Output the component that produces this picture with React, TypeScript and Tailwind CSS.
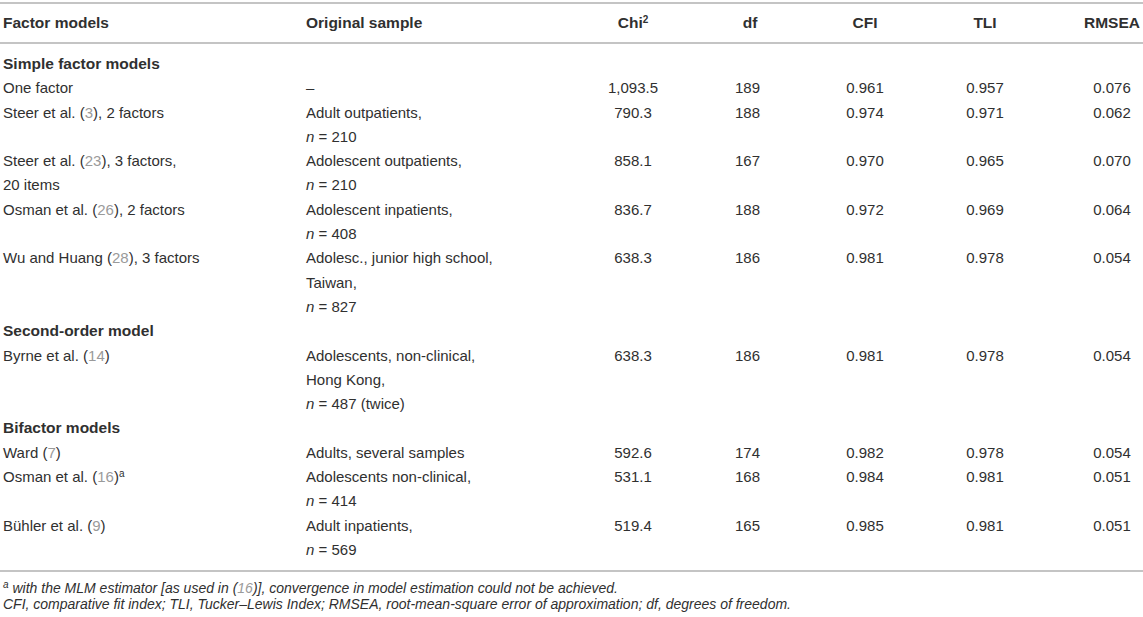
import type { ReactNode } from "react";

// Fit indices table for factor models of the scale.

type Row = {
  model: ReactNode;
  sample: ReactNode;
  chi?: string;
  df?: string;
  cfi?: string;
  tli?: string;
  rmsea?: string;
  section?: boolean;
};

function Ref({ n }: { n: string }) {
  return (
    <>
      (<span className="text-[#9a9a9a]">{n}</span>)
    </>
  );
}

function N({ v }: { v: string }) {
  return (
    <>
      <i>n</i> = {v}
    </>
  );
}

const rows: Row[] = [
  { section: true, model: "Simple factor models", sample: null },
  { model: "One factor", sample: "–", chi: "1,093.5", df: "189", cfi: "0.961", tli: "0.957", rmsea: "0.076" },
  {
    model: <>Steer et al. <Ref n="3" />, 2 factors</>,
    sample: <>Adult outpatients,<br /><N v="210" /></>,
    chi: "790.3", df: "188", cfi: "0.974", tli: "0.971", rmsea: "0.062",
  },
  {
    model: <>Steer et al. <Ref n="23" />, 3 factors,<br />20 items</>,
    sample: <>Adolescent outpatients,<br /><N v="210" /></>,
    chi: "858.1", df: "167", cfi: "0.970", tli: "0.965", rmsea: "0.070",
  },
  {
    model: <>Osman et al. <Ref n="26" />, 2 factors</>,
    sample: <>Adolescent inpatients,<br /><N v="408" /></>,
    chi: "836.7", df: "188", cfi: "0.972", tli: "0.969", rmsea: "0.064",
  },
  {
    model: <>Wu and Huang <Ref n="28" />, 3 factors</>,
    sample: <>Adolesc., junior high school,<br />Taiwan,<br /><N v="827" /></>,
    chi: "638.3", df: "186", cfi: "0.981", tli: "0.978", rmsea: "0.054",
  },
  { section: true, model: "Second-order model", sample: null },
  {
    model: <>Byrne et al. <Ref n="14" /></>,
    sample: <>Adolescents, non-clinical,<br />Hong Kong,<br /><N v="487 (twice)" /></>,
    chi: "638.3", df: "186", cfi: "0.981", tli: "0.978", rmsea: "0.054",
  },
  { section: true, model: "Bifactor models", sample: null },
  {
    model: <>Ward <Ref n="7" /></>,
    sample: "Adults, several samples",
    chi: "592.6", df: "174", cfi: "0.982", tli: "0.978", rmsea: "0.054",
  },
  {
    model: <>Osman et al. <Ref n="16" /><sup className="text-[10px]">a</sup></>,
    sample: <>Adolescents non-clinical,<br /><N v="414" /></>,
    chi: "531.1", df: "168", cfi: "0.984", tli: "0.981", rmsea: "0.051",
  },
  {
    model: <>Bühler et al. <Ref n="9" /></>,
    sample: <>Adult inpatients,<br /><N v="569" /></>,
    chi: "519.4", df: "165", cfi: "0.985", tli: "0.981", rmsea: "0.051",
  },
];

export default function App() {
  return (
    <div className="w-[1143px] h-[617px] bg-white text-[#303030] font-['Liberation_Sans',Arial,sans-serif] pt-[2px]">
      <table className="w-[1143px] table-fixed border-collapse text-[15px] leading-[24.3px]">
        <colgroup>
          <col className="w-[303px]" />
          <col className="w-[277px]" />
          <col className="w-[106px]" />
          <col className="w-[128px]" />
          <col className="w-[102px]" />
          <col className="w-[138px]" />
          <col className="w-[89px]" />
        </colgroup>
        <thead>
          <tr className="border-t-2 border-b-2 border-[#c4c4c4] text-[15.5px]">
            <th className="h-[40px] pl-[3px] text-left font-bold">Factor models</th>
            <th className="pl-[3px] text-left font-bold">Original sample</th>
            <th className="text-center font-bold">
              Chi<sup className="text-[10px]">2</sup>
            </th>
            <th className="text-center font-bold">df</th>
            <th className="text-center font-bold">CFI</th>
            <th className="text-center font-bold">TLI</th>
            <th className="pl-[27px] text-center font-bold">RMSEA</th>
          </tr>
        </thead>
        <tbody className="border-b-2 border-[#c4c4c4]">
          <tr>
            <td colSpan={7} className="h-[9px] p-0" />
          </tr>
          {rows.map((r, i) =>
            r.section ? (
              <tr key={i}>
                <td colSpan={7} className="pl-[3px] text-[15.5px] font-bold">
                  {r.model}
                </td>
              </tr>
            ) : (
              <tr key={i} className="align-top">
                <td className="pl-[3px]">{r.model}</td>
                <td className="pl-[3px]">{r.sample}</td>
                <td className="text-center">{r.chi}</td>
                <td className="pr-[5px] text-center">{r.df}</td>
                <td className="text-center">{r.cfi}</td>
                <td className="text-center">{r.tli}</td>
                <td className="pl-[27px] text-center">{r.rmsea}</td>
              </tr>
            )
          )}
          <tr>
            <td colSpan={7} className="h-[9px] p-0" />
          </tr>
        </tbody>
      </table>
      <div className="pl-[3px] pt-[8px] text-[14px] leading-[16px] italic">
        <p>
          <sup className="text-[10px]">a</sup> with the MLM estimator [as used in (
          <span className="text-[#9a9a9a]">16</span>)], convergence in model estimation could not be achieved.
        </p>
        <p>
          CFI, comparative fit index; TLI, Tucker–Lewis Index; RMSEA, root-mean-square error of approximation;
          df, degrees of freedom.
        </p>
      </div>
    </div>
  );
}
